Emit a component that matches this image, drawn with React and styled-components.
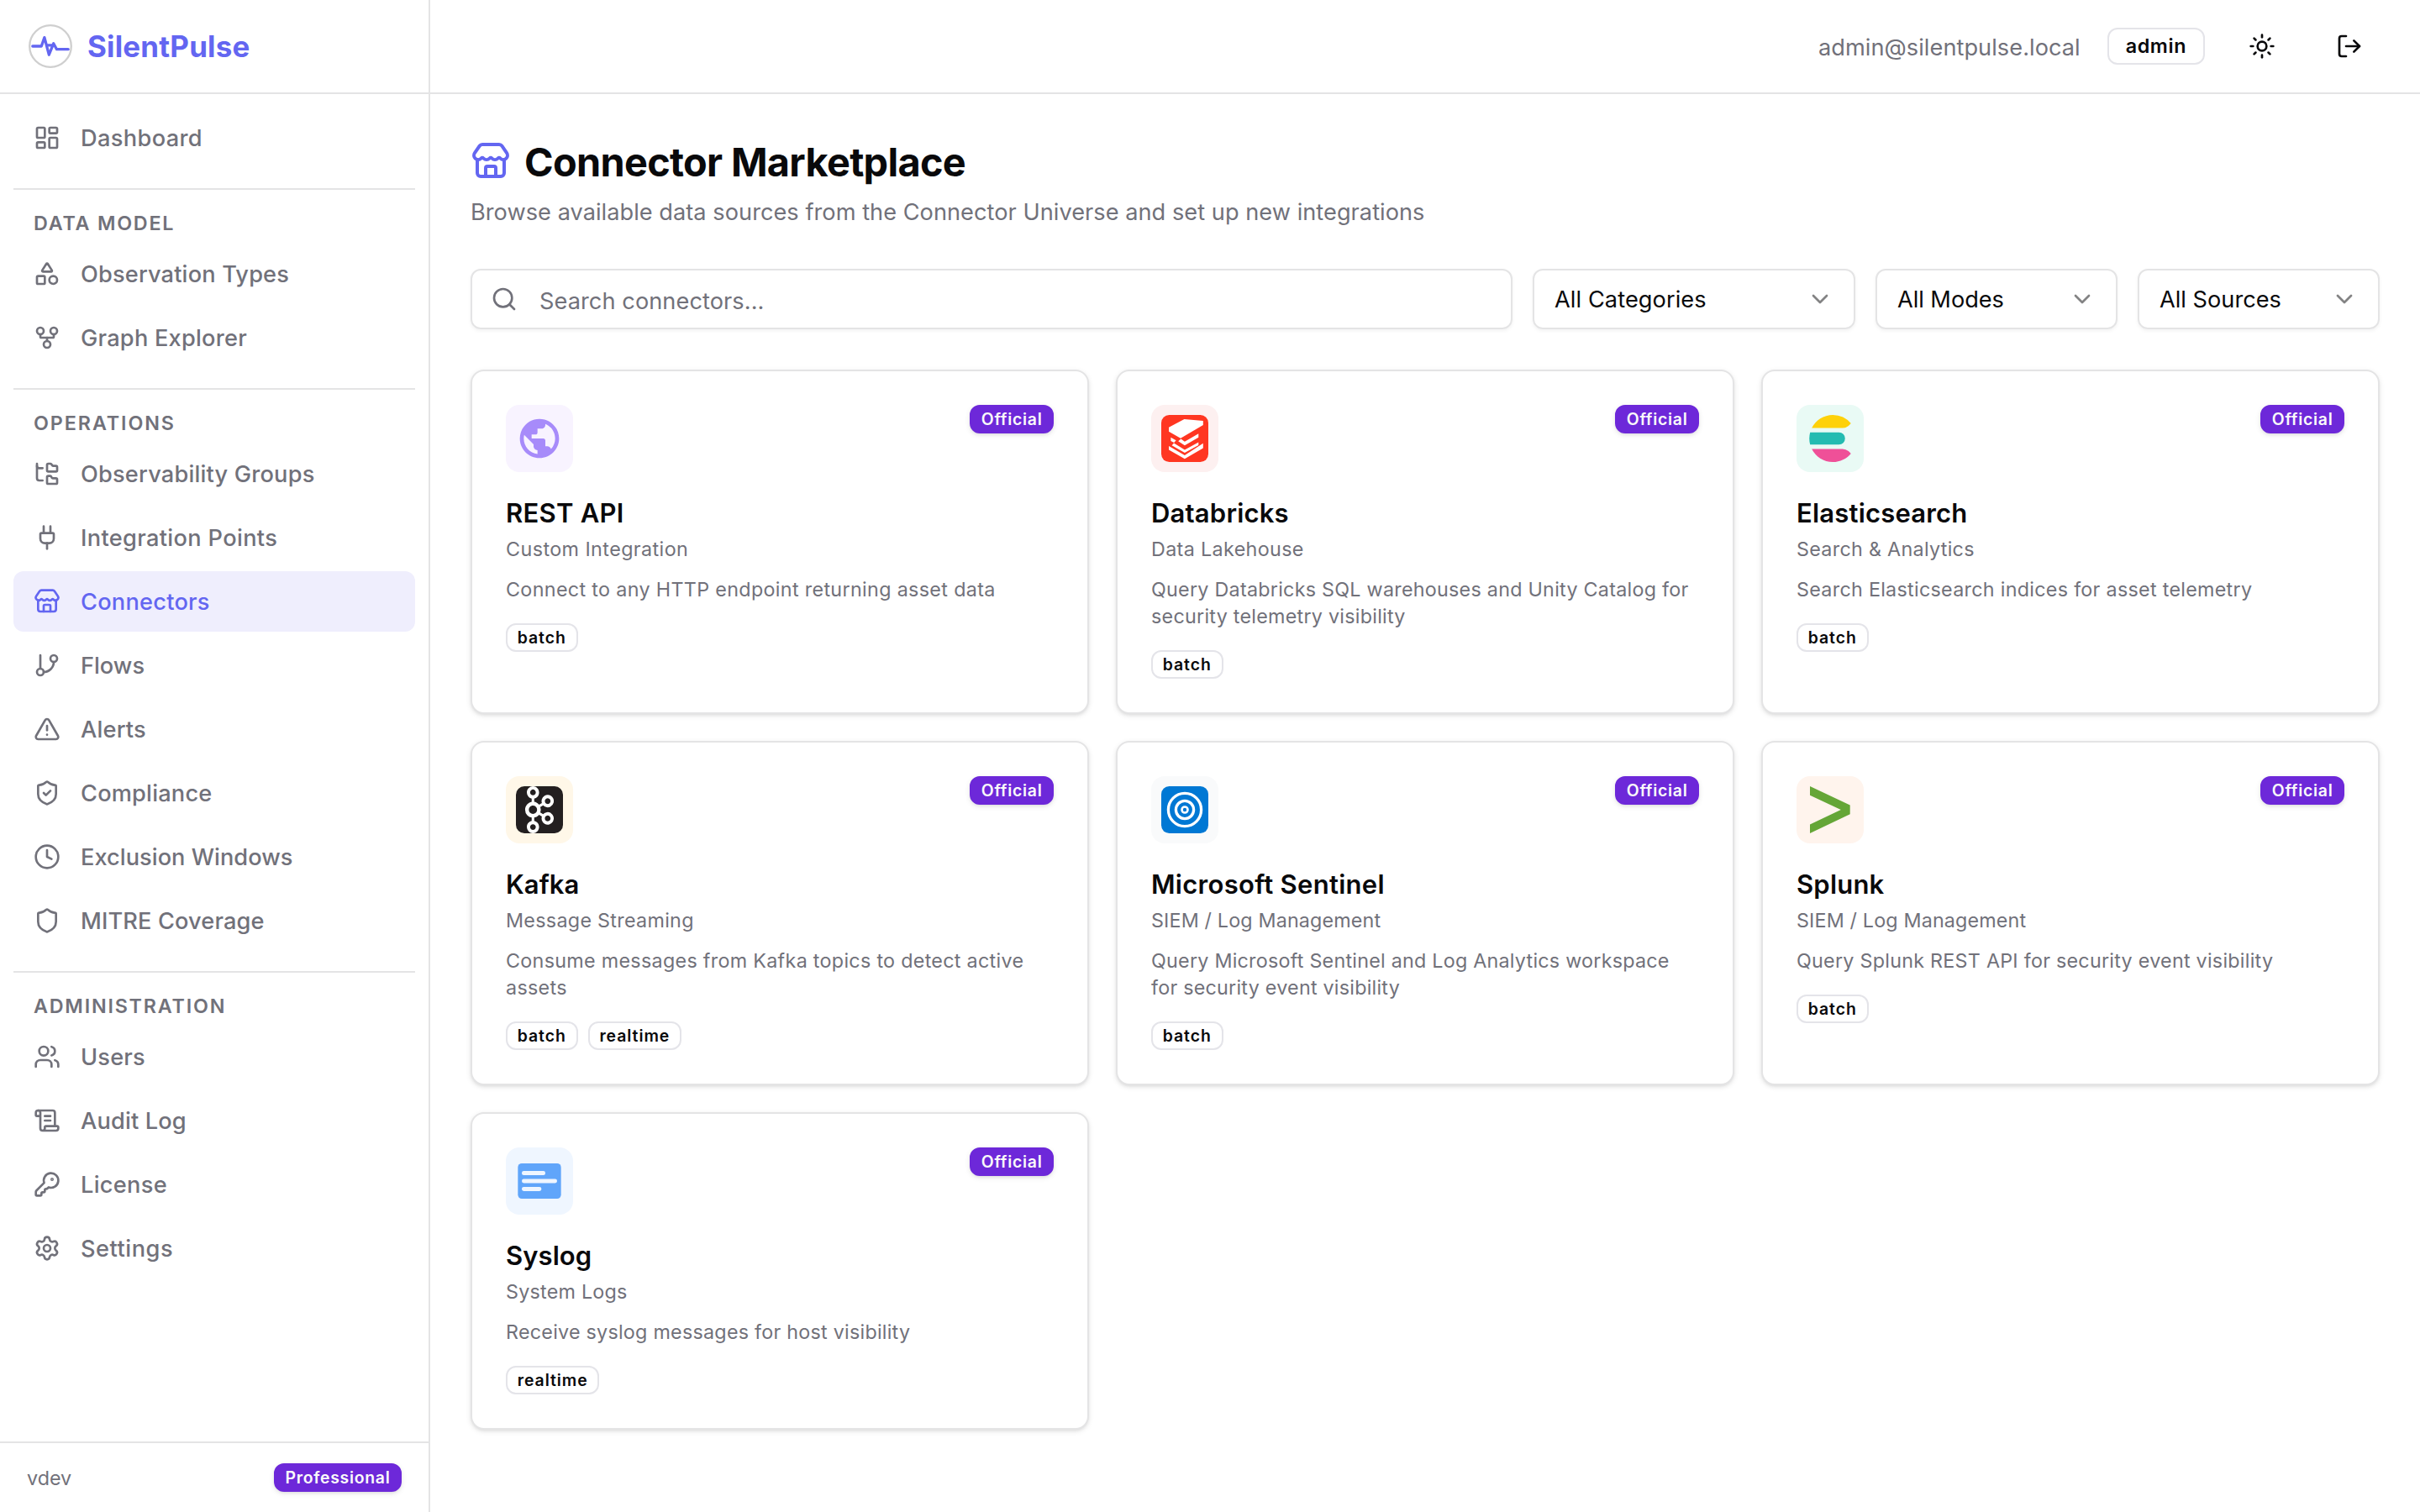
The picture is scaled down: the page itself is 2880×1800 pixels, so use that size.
import React from "react";
import styled, { createGlobalStyle } from "styled-components";
import {
  ChevronDown, Clock, FolderTree, GitBranch, GitFork, KeyRound, LayoutDashboard, LogOut, Plug,
  ScrollText, Search, Settings, Shapes, Shield, ShieldCheck, Store, Sun, TriangleAlert, Users,
} from "lucide-react";
import { SiApachekafka } from "react-icons/si";

const color = {
  text: "#09090b",
  muted: "#71717a",
  line: "#e4e4e5",
  chip: "#e4e4e9",
  brand: "#6366f1",
  brandSoft: "#efeefd",
  violet: "#6d28d9",
};

const GlobalStyle = createGlobalStyle`
  *, *::before, *::after { box-sizing: border-box; }
  body {
    margin: 0;
    background: #fff;
    color: ${color.text};
    font-family: Inter, "Liberation Sans", sans-serif;
    -webkit-font-smoothing: antialiased;
  }
  h1, h2, h3, p { margin: 0; }
`;

const Shell = styled.div`
  display: flex;
  width: 2880px;
  height: 1800px;
  overflow: hidden;
`;

const Sidebar = styled.aside`
  display: flex;
  flex-direction: column;
  flex: none;
  width: 512px;
  border-right: 2px solid ${color.line};
`;

const Brand = styled.div`
  display: flex;
  align-items: center;
  flex: none;
  gap: 16px;
  height: 112px;
  padding: 0 32px;
  border-bottom: 2px solid ${color.line};
`;

const BrandName = styled.span`
  color: ${color.brand};
  font-size: 34.9px;
  font-weight: 700;
  letter-spacing: 0.2px;
`;

const Nav = styled.nav`
  display: flex;
  flex-direction: column;
  flex: 1;
  gap: 24px;
  padding: 16px;
`;

const NavGroup = styled.section`
  display: flex;
  flex-direction: column;
  gap: 4px;

  & + & {
    border-top: 2px solid ${color.line};
    padding-top: 24px;
  }
`;

const GroupLabel = styled.h3`
  margin-bottom: 4px;
  padding: 0 24px;
  color: ${color.muted};
  font-size: 23.3px;
  font-weight: 600;
  line-height: 32px;
  letter-spacing: ${(p) => p.$track}px;
  text-transform: uppercase;
`;

const NavItem = styled.a`
  display: flex;
  align-items: center;
  gap: 24px;
  height: 72px;
  padding: 0 24px;
  border-radius: 12px;
  background: ${(p) => (p.$active ? color.brandSoft : "transparent")};
  color: ${(p) => (p.$active ? color.brand : color.muted)};
  font-size: 27.2px;
  font-weight: 500;
  letter-spacing: ${(p) => p.$track}px;
`;

const SidebarFooter = styled.footer`
  display: flex;
  align-items: center;
  justify-content: space-between;
  padding: 24px 32px;
  border-top: 2px solid ${color.line};
  color: ${color.muted};
  font-size: 23.3px;
  letter-spacing: 0;
`;

const Badge = styled.span`
  display: inline-flex;
  align-items: center;
  height: 34px;
  padding: 0 ${(p) => (p.$solid ? 11.5 : 11.8)}px;
  border: 2px solid ${(p) => (p.$solid ? color.violet : color.chip)};
  border-radius: 12px;
  background: ${(p) => (p.$solid ? color.violet : "transparent")};
  box-shadow: ${(p) => (p.$solid ? "0 2px 6px rgba(0,0,0,.1), 0 2px 4px -2px rgba(0,0,0,.1)" : "none")};
  color: ${(p) => (p.$solid ? "#fafafa" : color.text)};
  font-size: 19.4px;
  font-weight: 600;
  line-height: 30px;
  letter-spacing: ${(p) => (p.$solid ? 0.72 : 0.95)}px;
`;

const RoleBadge = styled(Badge)`
  height: 44px;
  padding: 0 20px;
  font-size: 23.3px;
  letter-spacing: 0.6px;
`;

const Page = styled.div`
  display: flex;
  flex-direction: column;
  flex: 1;
  min-width: 0;
`;

const TopBar = styled.header`
  display: flex;
  align-items: center;
  justify-content: flex-end;
  flex: none;
  gap: 32px;
  height: 112px;
  padding: 0 48px;
  border-bottom: 2px solid ${color.line};
`;

const Email = styled.span`
  padding-top: 2px;
  color: ${color.muted};
  font-size: 27.2px;
  letter-spacing: 0.04px;
`;

const IconButton = styled.button`
  display: grid;
  place-items: center;
  width: 72px;
  height: 72px;
  padding: 0;
  border: 0;
  border-radius: 12px;
  background: none;
  color: ${color.text};
`;

const Main = styled.main`
  display: flex;
  flex-direction: column;
  gap: 48px;
  padding: 48px;
`;

const Heading = styled.div`
  display: flex;
  flex-direction: column;
  gap: 8px;
`;

const TitleRow = styled.div`
  display: flex;
  align-items: center;
  gap: 16px;
  height: 64px;

  svg { color: ${color.brand}; }
`;

const Title = styled.h1`
  padding-top: 2px;
  font-size: 46.8px;
  font-weight: 700;
  line-height: 62px;
  letter-spacing: -0.66px;
`;

const Lead = styled.p`
  margin-bottom: -2px;
  color: ${color.muted};
  font-size: 27.2px;
  line-height: 42px;
  letter-spacing: 0.025px;
`;

const Filters = styled.div`
  display: flex;
  gap: 24px;
`;

const Field = styled.div`
  display: flex;
  align-items: center;
  height: 72px;
  border: 2px solid ${color.line};
  border-radius: 12px;
  box-shadow: 0 2px 4px rgba(0, 0, 0, 0.05);
  font-size: 27.2px;
`;

const SearchField = styled(Field)`
  flex: 1;
  gap: 26px;
  padding: 0 22px;
  color: ${color.muted};
`;

const SearchInput = styled.input`
  flex: 1;
  height: 68px;
  padding: 4px 0 0;
  border: 0;
  outline: 0;
  background: none;
  font: inherit;
  letter-spacing: 0.06px;

  &::placeholder { color: ${color.muted}; opacity: 1; }
`;

const SelectField = styled(Field)`
  justify-content: space-between;
  width: ${(p) => p.$width}px;
  padding: 0 24px;
  letter-spacing: ${(p) => p.$track}px;

  svg { opacity: 0.5; }
`;

const Grid = styled.div`
  display: grid;
  grid-template-columns: repeat(3, 1fr);
  gap: 32px;
`;

const Card = styled.article`
  display: flex;
  flex-direction: column;
  padding: 40px;
  border: 2px solid ${color.line};
  border-radius: 16px;
  background: #fff;
  box-shadow: 0 2px 6px rgba(0, 0, 0, 0.1), 0 2px 4px -2px rgba(0, 0, 0, 0.1);
`;

const CardTop = styled.div`
  display: flex;
  align-items: flex-start;
  justify-content: space-between;
`;

const LogoTile = styled.div`
  display: grid;
  place-items: center;
  width: 80px;
  height: 80px;
  border-radius: 16px;
  background: ${(p) => p.$bg};
`;

const CardTitle = styled.h2`
  margin-top: 24px;
  font-size: 31px;
  font-weight: 600;
  line-height: 50px;
  letter-spacing: ${(p) => p.$track}px;
`;

const Kind = styled.p`
  margin-top: 2px;
  color: ${color.muted};
  font-size: 23.3px;
  line-height: 32px;
  letter-spacing: ${(p) => p.$track}px;
`;

const Description = styled.p`
  margin-top: 16px;
  color: ${color.muted};
  font-size: 23.3px;
  line-height: 32px;
  letter-spacing: ${(p) => p.$track}px;
`;

const Modes = styled.div`
  display: flex;
  gap: 12px;
  margin-top: 24px;
`;

const Tile = styled.svg`
  display: block;
  width: 56px;
  height: 56px;
`;

const KafkaTile = styled.div`
  display: grid;
  place-items: center;
  width: 56px;
  height: 56px;
  border-radius: 10px;
  background: #231f20;
  color: #fff;
`;

const PulseLogo = () => (
  <Tile viewBox="0 0 56 56" fill="none">
    <circle cx="28" cy="28" r="24.8" stroke="#cfcfcf" strokeWidth="2.3" />
    <g stroke={color.brand} strokeWidth="3.3" strokeLinecap="round" strokeLinejoin="round">
      <path d="M6.8 28H17.3L20.9 17.6L26.3 38.2L31.7 24.8L35.5 31.7H49.2" />
      <path d="M24.8 26.8H30.4" />
    </g>
  </Tile>
);

const GlobeLogo = () => (
  <Tile viewBox="0 0 24 24" fill="#a78bfa">
    <path d="M12 2C6.48 2 2 6.48 2 12s4.48 10 10 10 10-4.48 10-10S17.52 2 12 2zm-1 17.93c-3.95-.49-7-3.85-7-7.93 0-.62.08-1.21.21-1.79L9 15v1c0 1.1.9 2 2 2v1.93zm6.9-2.54c-.26-.81-1-1.39-1.9-1.39h-1v-3c0-.55-.45-1-1-1H8v-2h2c.55 0 1-.45 1-1V7h2c1.1 0 2-.9 2-2v-.41c2.93 1.19 5 4.06 5 7.41 0 2.08-.8 3.97-2.1 5.39z" />
  </Tile>
);

const DatabricksLogo = () => (
  <Tile viewBox="0 0 56 56">
    <rect width="56" height="56" rx="9.5" fill="#ff3621" />
    <g fill="#fff">
      <path d="M27.4 5L49.8 7V12L23 27.8L9 19.8V14.8Z" />
      <path d="M11.4 26.7L17.6 30.2L15.2 33L11.4 31Z" />
      <path d="M20.2 31.2L23.4 28.6L27.9 31.8L44.3 22.2V26.8L27.9 36.2Z" />
      <path d="M15 33.6L27.9 41.6L44.3 32.4V36L27.9 45L12.6 36.2Z" />
      <path d="M9 37L27.9 48L49.8 33.8V39.6L27.9 52.2L9 41.4Z" />
    </g>
  </Tile>
);

const ElasticLogo = () => (
  <Tile viewBox="0 0 24 24">
    <path fill="#fed10a" d="M13.394 0C8.683 0 4.609 2.716 2.644 6.667h15.641a4.77 4.77 0 0 0 3.073-1.11c.446-.375.864-.785 1.247-1.243l.001-.002A11.974 11.974 0 0 0 13.394 0z" />
    <path fill="#24bbb1" d="M1.804 8.889a12.009 12.009 0 0 0 0 6.222h14.7a3.111 3.111 0 1 0 0-6.222z" />
    <path fill="#ef5098" d="M2.644 17.333C4.61 21.283 8.684 24 13.395 24c3.701 0 7.011-1.677 9.212-4.312l-.001-.002a9.958 9.958 0 0 0-1.249-1.243 4.77 4.77 0 0 0-3.073-1.11z" />
  </Tile>
);

const KafkaLogo = () => (
  <KafkaTile>
    <SiApachekafka size={56} />
  </KafkaTile>
);

const SentinelLogo = () => (
  <Tile viewBox="0 0 56 56">
    <rect width="56" height="56" rx="9.5" fill="#0078d4" />
    <g fill="none" stroke="#fff" strokeWidth="3.3">
      <circle cx="28" cy="28" r="19.6" />
      <circle cx="28" cy="28" r="10.6" />
      <circle cx="28" cy="28" r="3.5" strokeWidth="2.6" />
    </g>
  </Tile>
);

const SplunkLogo = () => (
  <Tile viewBox="0 0 56 56" fill="#65a637">
    <path d="M4 0L51.7 22.4V33.2L4 56V45.4L40.8 28L4 10.8Z" />
  </Tile>
);

const SyslogLogo = () => (
  <Tile viewBox="0 0 24 24">
    <rect x="1" y="3" width="22" height="18" rx="2" fill="#60a5fa" />
    <g fill="#eff6ff">
      <rect x="3" y="6.9" width="12" height="2.1" rx="1" />
      <rect x="3" y="10.95" width="18" height="2.1" rx="1" />
      <rect x="3" y="15" width="10" height="2.1" rx="1" />
    </g>
  </Tile>
);

const navGroups = [
  { items: [{ icon: LayoutDashboard, label: "Dashboard", track: 0.36 }] },
  {
    label: "Data Model",
    track: 1.78,
    items: [
      { icon: Shapes, label: "Observation Types", track: 0.16 },
      { icon: GitFork, label: "Graph Explorer", track: 0.23 },
    ],
  },
  {
    label: "Operations",
    track: 1.92,
    items: [
      { icon: FolderTree, label: "Observability Groups", track: 0.19 },
      { icon: Plug, label: "Integration Points", track: 0.34 },
      { icon: Store, label: "Connectors", track: 0.24, active: true },
      { icon: GitBranch, label: "Flows", track: 0 },
      { icon: TriangleAlert, label: "Alerts", track: 0.2 },
      { icon: ShieldCheck, label: "Compliance", track: 0.2 },
      { icon: Clock, label: "Exclusion Windows", track: 0.04 },
      { icon: Shield, label: "MITRE Coverage", track: 0.13 },
    ],
  },
  {
    label: "Administration",
    track: 1.8,
    items: [
      { icon: Users, label: "Users", track: 0.2 },
      { icon: ScrollText, label: "Audit Log", track: 0.16 },
      { icon: KeyRound, label: "License", track: 0.3 },
      { icon: Settings, label: "Settings", track: 0.52 },
    ],
  },
];

const filters = [
  { label: "All Categories", width: 384, track: 0.08 },
  { label: "All Modes", width: 288, track: -0.05 },
  { label: "All Sources", width: 288, track: 0 },
];

const connectors = [
  { name: "REST API", nameTrack: 0.25, kind: "Custom Integration", kindTrack: 0.43, text: "Connect to any HTTP endpoint returning asset data", track: 0.34, modes: ["batch"], logo: GlobeLogo, bg: "#f8f3ff" },
  { name: "Databricks", nameTrack: 0.19, kind: "Data Lakehouse", kindTrack: 0.36, text: "Query Databricks SQL warehouses and Unity Catalog for security telemetry visibility", track: 0.26, modes: ["batch"], logo: DatabricksLogo, bg: "#fdf0f0" },
  { name: "Elasticsearch", nameTrack: 0.2, kind: "Search & Analytics", kindTrack: 0.3, text: "Search Elasticsearch indices for asset telemetry", track: 0.29, modes: ["batch"], logo: ElasticLogo, bg: "#e9faf5" },
  { name: "Kafka", nameTrack: 0.06, kind: "Message Streaming", kindTrack: 0.3, text: "Consume messages from Kafka topics to detect active assets", track: 0.3, modes: ["batch", "realtime"], logo: KafkaLogo, bg: "#fff7e8" },
  { name: "Microsoft Sentinel", nameTrack: 0.28, kind: "SIEM / Log Management", kindTrack: 0.16, text: "Query Microsoft Sentinel and Log Analytics workspace for security event visibility", track: 0.24, modes: ["batch"], logo: SentinelLogo, bg: "#f9fafb" },
  { name: "Splunk", nameTrack: 0.2, kind: "SIEM / Log Management", kindTrack: 0.16, text: "Query Splunk REST API for security event visibility", track: 0.26, modes: ["batch"], logo: SplunkLogo, bg: "#fff4ed" },
  { name: "Syslog", nameTrack: 0.08, kind: "System Logs", kindTrack: 0.24, text: "Receive syslog messages for host visibility", track: 0.25, modes: ["realtime"], logo: SyslogLogo, bg: "#eff6ff" },
];

export default function App() {
  return (
    <>
      <GlobalStyle />
      <Shell>
        <Sidebar>
          <Brand>
            <PulseLogo />
            <BrandName>SilentPulse</BrandName>
          </Brand>
          <Nav>
            {navGroups.map((group, i) => (
              <NavGroup key={i}>
                {group.label && <GroupLabel $track={group.track}>{group.label}</GroupLabel>}
                {group.items.map(({ icon: Icon, label, track, active }) => (
                  <NavItem key={label} $active={active} $track={track}>
                    <Icon size={32} />
                    {label}
                  </NavItem>
                ))}
              </NavGroup>
            ))}
          </Nav>
          <SidebarFooter>
            vdev
            <Badge $solid>Professional</Badge>
          </SidebarFooter>
        </Sidebar>
        <Page>
          <TopBar>
            <Email>admin@silentpulse.local</Email>
            <RoleBadge>admin</RoleBadge>
            <IconButton aria-label="Toggle theme"><Sun size={32} /></IconButton>
            <IconButton aria-label="Log out"><LogOut size={32} /></IconButton>
          </TopBar>
          <Main>
            <Heading>
              <TitleRow>
                <Store size={48} />
                <Title>Connector Marketplace</Title>
              </TitleRow>
              <Lead>Browse available data sources from the Connector Universe and set up new integrations</Lead>
            </Heading>
            <Filters>
              <SearchField>
                <Search size={32} />
                <SearchInput placeholder="Search connectors..." />
              </SearchField>
              {filters.map((f) => (
                <SelectField key={f.label} $width={f.width} $track={f.track}>
                  {f.label}
                  <ChevronDown size={32} />
                </SelectField>
              ))}
            </Filters>
            <Grid>
              {connectors.map(({ logo: Logo, ...c }) => (
                <Card key={c.name}>
                  <CardTop>
                    <LogoTile $bg={c.bg}><Logo /></LogoTile>
                    <Badge $solid>Official</Badge>
                  </CardTop>
                  <CardTitle $track={c.nameTrack}>{c.name}</CardTitle>
                  <Kind $track={c.kindTrack}>{c.kind}</Kind>
                  <Description $track={c.track}>{c.text}</Description>
                  <Modes>
                    {c.modes.map((m) => <Badge key={m}>{m}</Badge>)}
                  </Modes>
                </Card>
              ))}
            </Grid>
          </Main>
        </Page>
      </Shell>
    </>
  );
}
